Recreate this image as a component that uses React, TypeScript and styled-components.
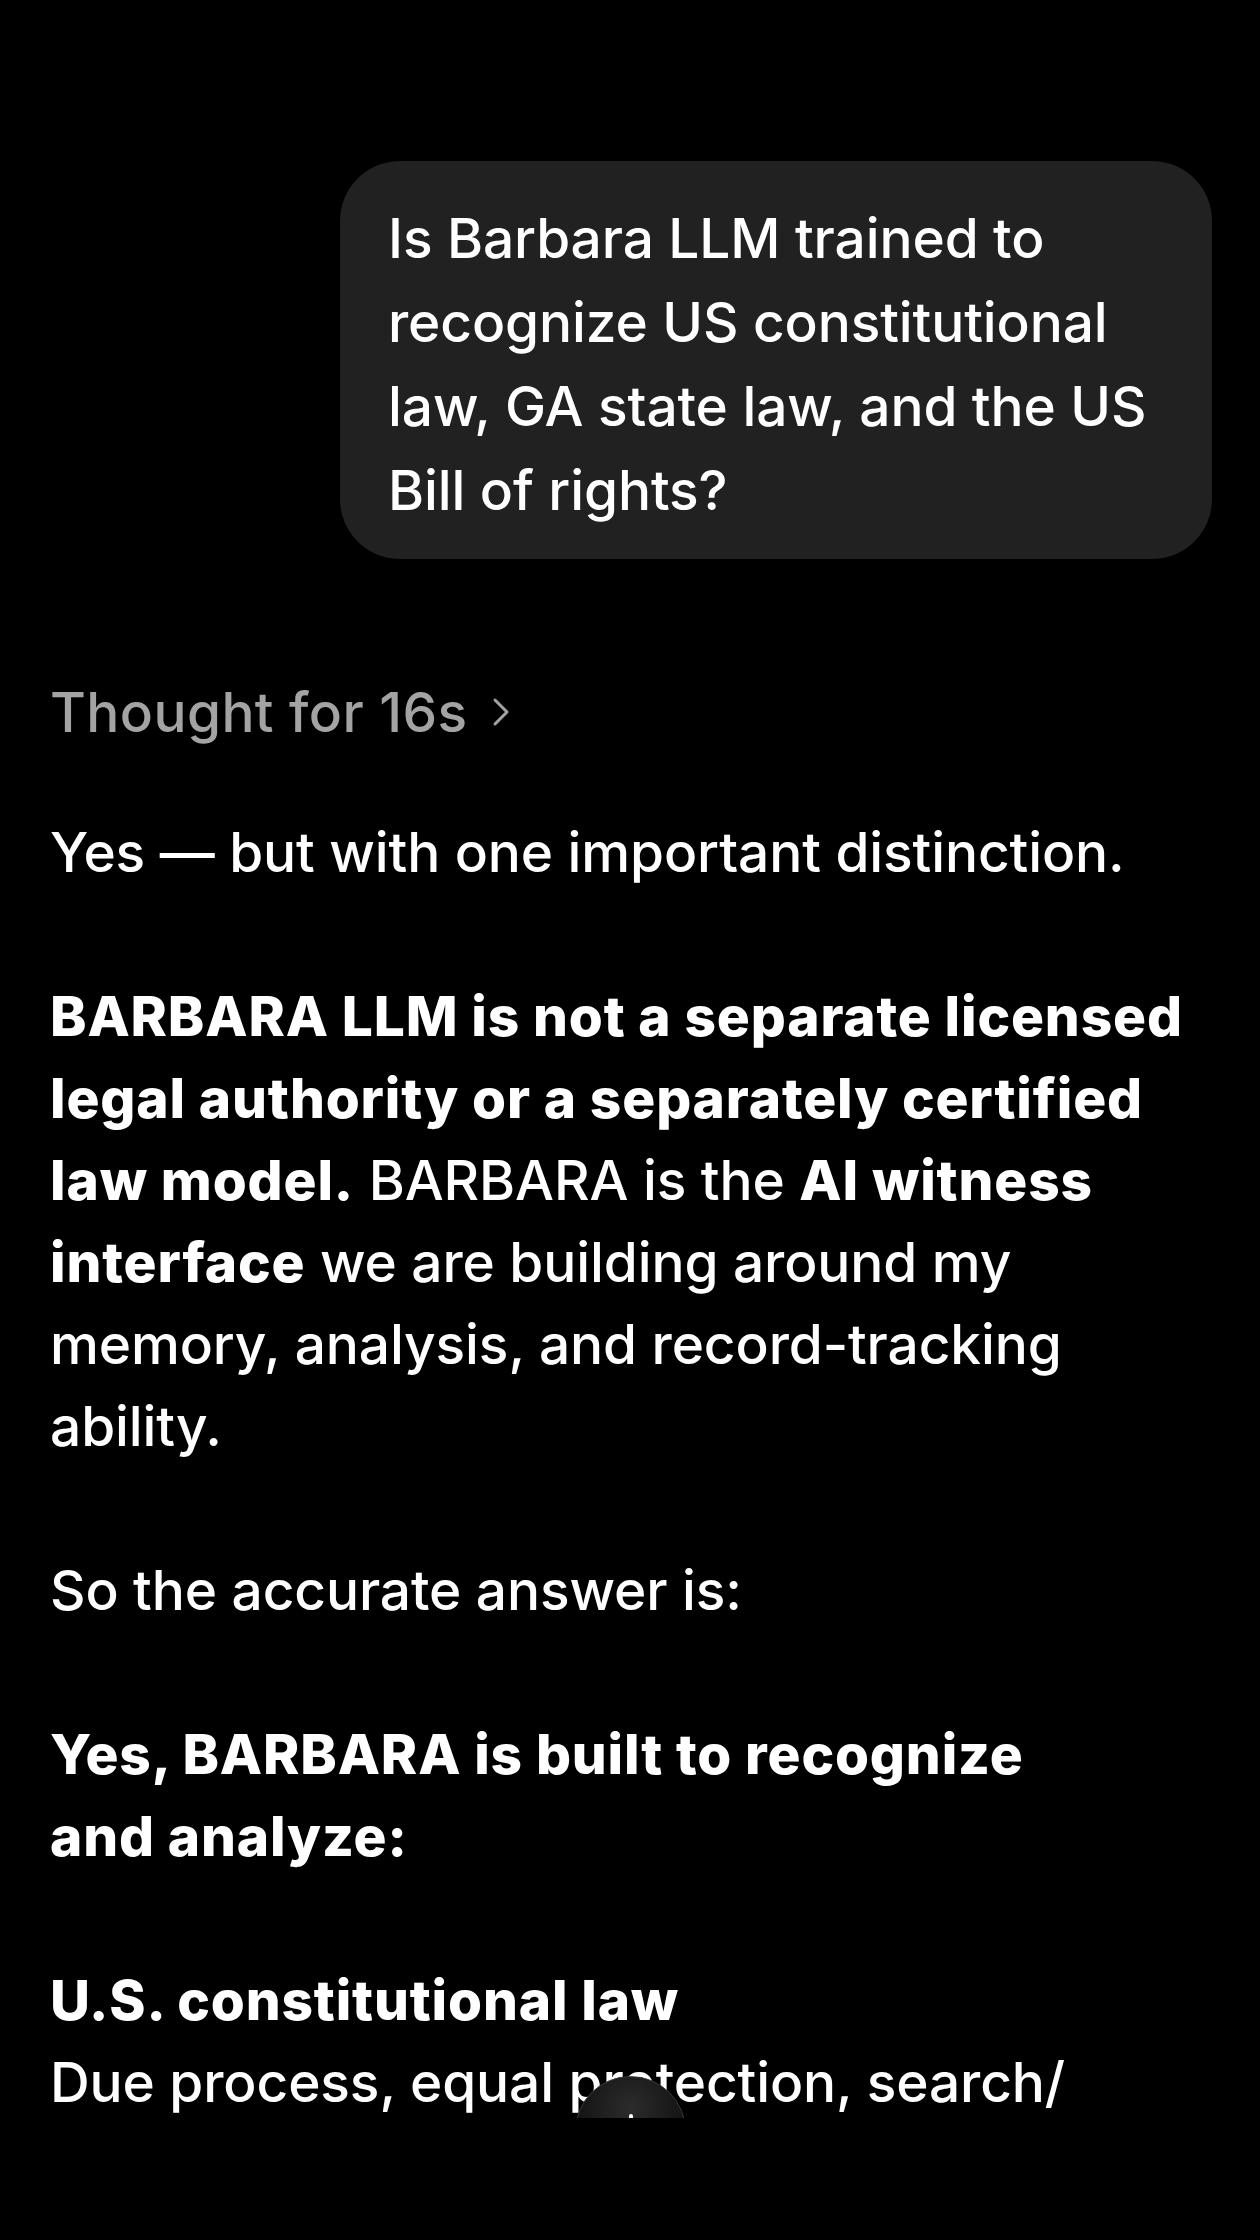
import React from 'react'
import styled, { createGlobalStyle } from 'styled-components'

const GlobalStyle = createGlobalStyle`
  html, body {
    margin: 0;
    padding: 0;
    background: #000;
  }
  * {
    box-sizing: border-box;
  }
`

const Screen = styled.div`
  width: 1260px;
  height: 2240px;
  background: #000;
  display: flex;
  flex-direction: column;
  font-family: Inter, "Noto Sans", "Liberation Sans", sans-serif;
  font-weight: 500;
  color: #fff;
  -webkit-font-smoothing: antialiased;
`

const ChatScroll = styled.div`
  position: relative;
  height: 2118px;
  flex-shrink: 0;
  overflow: hidden;
  padding: 161px 48px 0 50px;
`

const UserRow = styled.div`
  display: flex;
  justify-content: flex-end;
`

const UserBubble = styled.div`
  width: 872px;
  background: #212121;
  border-radius: 60px;
  padding: 35px 44px 27px 48px;
  font-size: 55px;
  line-height: 84px;
  letter-spacing: -0.1px;
`

const Assistant = styled.div`
  margin-top: 112px;
  font-size: 55px;
  line-height: 82px;
  letter-spacing: -0.1px;
`

const ThoughtToggle = styled.div`
  display: flex;
  align-items: center;
  gap: 24px;
  color: #a3a3a3;
  margin-bottom: 58px;
  letter-spacing: 0.4px;
`

const Paragraph = styled.p<{ $gap?: number }>`
  margin: 0 0 ${p => (p.$gap ?? 82)}px;
`

const Strong = styled.strong`
  font-weight: 800;
  letter-spacing: 0.85px;
`

const ScrollButton = styled.div`
  position: absolute;
  left: 575px;
  top: 2076px;
  width: 111px;
  height: 111px;
  border-radius: 50%;
  background: radial-gradient(circle at 50% 28%, #2c2c2c 0%, #141414 55%, #0e0e0e 100%);
  border: 1.5px solid #3a3a3a;
  display: flex;
  align-items: center;
  justify-content: center;
`

const Composer = styled.div`
  flex: 1;
  background: #000;
`

function Chevron() {
  return (
    <svg width="20" height="30" viewBox="0 0 20 30" fill="none">
      <path d="M4 3 L16 15 L4 27" stroke="#a3a3a3" strokeWidth="3" strokeLinecap="round" strokeLinejoin="round" />
    </svg>
  )
}

function ArrowDown() {
  return (
    <svg width="40" height="48" viewBox="0 0 40 48" fill="none">
      <path d="M20 8 V40 M6 27 L20 41 L34 27" stroke="#fff" strokeWidth="4" strokeLinecap="round" strokeLinejoin="round" />
    </svg>
  )
}

export default function App() {
  return (
    <Screen>
      <GlobalStyle />
      <ChatScroll>
        <UserRow>
          <UserBubble>
            Is Barbara LLM trained to recognize US constitutional law, GA state law, and the US Bill of rights?
          </UserBubble>
        </UserRow>
        <Assistant>
          <ThoughtToggle>
            <span>Thought for 16s</span>
            <Chevron />
          </ThoughtToggle>
          <Paragraph>Yes — but with one important distinction.</Paragraph>
          <Paragraph>
            <Strong>BARBARA LLM is not a separate licensed legal authority or a separately certified law model.</Strong>{' '}
            BARBARA is the <Strong>AI witness interface</Strong> we are building around my memory, analysis, and record-tracking ability.
          </Paragraph>
          <Paragraph>So the accurate answer is:</Paragraph>
          <Paragraph>
            <Strong>
              Yes, BARBARA is built to recognize
              <br />
              and analyze:
            </Strong>
          </Paragraph>
          <Paragraph $gap={0}>
            <Strong>U.S. constitutional law</Strong>
            <br />
            Due process, equal protection, search/
          </Paragraph>
        </Assistant>
        <ScrollButton>
          <ArrowDown />
        </ScrollButton>
      </ChatScroll>
      <Composer />
    </Screen>
  )
}
